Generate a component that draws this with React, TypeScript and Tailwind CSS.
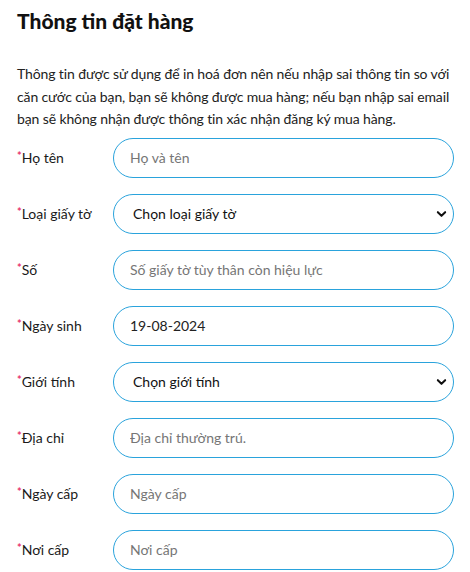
import React from 'react';

const rows: { label: string; kind: 'input' | 'select'; placeholder?: string; value?: string }[] = [
  { label: 'Họ tên', kind: 'input', placeholder: 'Họ và tên' },
  { label: 'Loại giấy tờ', kind: 'select', value: 'Chọn loại giấy tờ' },
  { label: 'Số', kind: 'input', placeholder: 'Số giấy tờ tùy thân còn hiệu lực' },
  { label: 'Ngày sinh', kind: 'input', value: '19-08-2024' },
  { label: 'Giới tính', kind: 'select', value: 'Chọn giới tính' },
  { label: 'Địa chỉ', kind: 'input', placeholder: 'Địa chỉ thường trú.' },
  { label: 'Ngày cấp', kind: 'input', placeholder: 'Ngày cấp' },
  { label: 'Nơi cấp', kind: 'input', placeholder: 'Nơi cấp' },
];

const App = () => {
  return (
    <div className="min-h-screen bg-white pl-[17px] pr-[2px] pt-[7px] text-[#1a1a1a] font-['Lato','Noto_Sans',sans-serif]">
      {/* Heading */}
      <h2 className="text-[21px] leading-7 font-black text-[#111]">Thông tin đặt hàng</h2>

      <p className="mt-[28px] text-[14px] leading-[22.5px] text-[#222] tracking-[-0.12px]">
        Thông tin được sử dụng để in hoá đơn nên nếu nhập sai thông tin so với căn cước của bạn, bạn sẽ không được mua hàng; nếu bạn nhập sai email bạn sẽ không nhận được thông tin xác nhận đăng ký mua hàng.
      </p>

      {/* Form */}
      <div className="mt-[7px] flex flex-col gap-4">
        {rows.map((row) => (
          <div key={row.label} className="flex items-center">
            <label className="w-[96px] shrink-0 text-[14px] text-[#1a1a1a]">
              <span className="text-[#e8336b] text-[11px] font-bold align-top relative top-[1px]">*</span>
              {row.label}
            </label>
            {row.kind === 'input' ? (
              <input
                type="text"
                defaultValue={row.value}
                placeholder={row.placeholder}
                className="h-10 w-[341px] rounded-full border border-[#2aa3dc] px-4 text-[14px] text-[#222] placeholder:text-[#767676] outline-none"
              />
            ) : (
              <div className="relative w-[341px]">
                <select className="h-10 w-full appearance-none rounded-full border border-[#2aa3dc] bg-white pl-[19px] pr-8 text-[14px] text-[#111] outline-none">
                  <option>{row.value}</option>
                </select>
                <svg
                  className="pointer-events-none absolute right-[7px] top-1/2 -translate-y-1/2"
                  width="11"
                  height="11"
                  viewBox="0 0 12 12"
                  fill="none"
                >
                  <path d="M2 4l4 4 4-4" stroke="#111" strokeWidth="2.2" strokeLinecap="round" strokeLinejoin="round" />
                </svg>
              </div>
            )}
          </div>
        ))}
      </div>
    </div>
  );
};

export default App;
